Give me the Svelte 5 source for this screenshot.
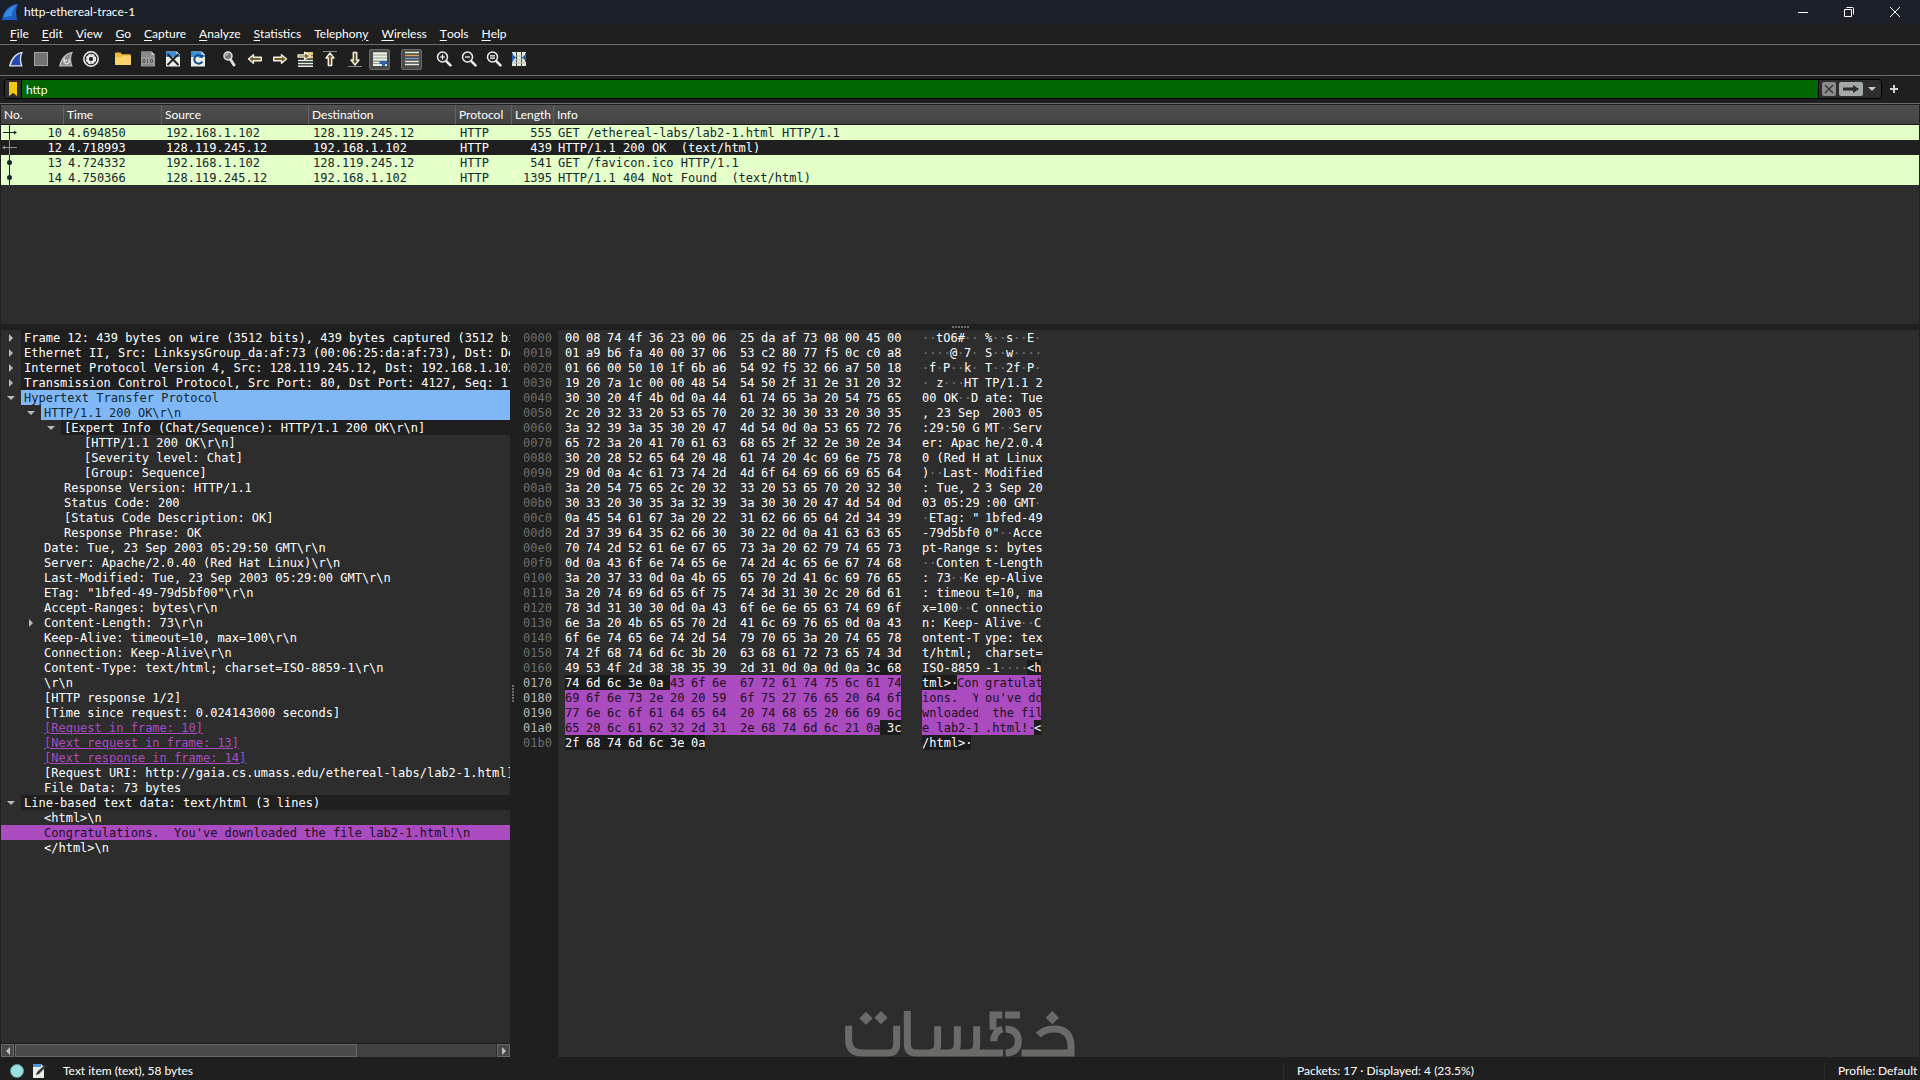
<script>
    const menus = ['File', 'Edit', 'View', 'Go', 'Capture', 'Analyze', 'Statistics', 'Telephony', 'Wireless', 'Tools', 'Help'];
    // Index of the underlined mnemonic, where it is not the first letter
    const mnemonics = { Telephony: 8 };

    const toolbar = [
        'start', 'stop', 'restart', 'options', '|',
        'open', 'save', 'close', 'reload', '|',
        'find', 'back', 'forward', 'goto', 'first', 'last', 'autoscroll', '|',
        'colorize', '|',
        'zoomin', 'zoomout', 'zoomreset', 'resize'
    ];
    const pressed = ['autoscroll', 'colorize'];

    const packets = [
        { mark: 'request', no: 10, time: '4.694850', src: '192.168.1.102', dst: '128.119.245.12', proto: 'HTTP', len: 555, info: 'GET /ethereal-labs/lab2-1.html HTTP/1.1' },
        { mark: 'response', no: 12, time: '4.718993', src: '128.119.245.12', dst: '192.168.1.102', proto: 'HTTP', len: 439, info: 'HTTP/1.1 200 OK  (text/html)' },
        { mark: 'dot', no: 13, time: '4.724332', src: '192.168.1.102', dst: '128.119.245.12', proto: 'HTTP', len: 541, info: 'GET /favicon.ico HTTP/1.1' },
        { mark: 'dot', no: 14, time: '4.750366', src: '128.119.245.12', dst: '192.168.1.102', proto: 'HTTP', len: 1395, info: 'HTTP/1.1 404 Not Found  (text/html)' }
    ];
    let selected = $state(12);
    let filter = $state('http');

    const tree = [
        { d: 0, arrow: 'right', look: 'proto', t: 'Frame 12: 439 bytes on wire (3512 bits), 439 bytes captured (3512 bits' },
        { d: 0, arrow: 'right', look: 'proto', t: 'Ethernet II, Src: LinksysGroup_da:af:73 (00:06:25:da:af:73), Dst: Dell' },
        { d: 0, arrow: 'right', look: 'proto', t: 'Internet Protocol Version 4, Src: 128.119.245.12, Dst: 192.168.1.102' },
        { d: 0, arrow: 'right', look: 'proto', t: 'Transmission Control Protocol, Src Port: 80, Dst Port: 4127, Seq: 1, A' },
        { d: 0, arrow: 'down', look: 'chat', t: 'Hypertext Transfer Protocol' },
        { d: 1, arrow: 'down', look: 'chat', t: 'HTTP/1.1 200 OK\\r\\n' },
        { d: 2, arrow: 'down', look: 'proto', t: '[Expert Info (Chat/Sequence): HTTP/1.1 200 OK\\r\\n]' },
        { d: 3, t: '[HTTP/1.1 200 OK\\r\\n]' },
        { d: 3, t: '[Severity level: Chat]' },
        { d: 3, t: '[Group: Sequence]' },
        { d: 2, t: 'Response Version: HTTP/1.1' },
        { d: 2, t: 'Status Code: 200' },
        { d: 2, t: '[Status Code Description: OK]' },
        { d: 2, t: 'Response Phrase: OK' },
        { d: 1, t: 'Date: Tue, 23 Sep 2003 05:29:50 GMT\\r\\n' },
        { d: 1, t: 'Server: Apache/2.0.40 (Red Hat Linux)\\r\\n' },
        { d: 1, t: 'Last-Modified: Tue, 23 Sep 2003 05:29:00 GMT\\r\\n' },
        { d: 1, t: 'ETag: "1bfed-49-79d5bf00"\\r\\n' },
        { d: 1, t: 'Accept-Ranges: bytes\\r\\n' },
        { d: 1, arrow: 'right', t: 'Content-Length: 73\\r\\n' },
        { d: 1, t: 'Keep-Alive: timeout=10, max=100\\r\\n' },
        { d: 1, t: 'Connection: Keep-Alive\\r\\n' },
        { d: 1, t: 'Content-Type: text/html; charset=ISO-8859-1\\r\\n' },
        { d: 1, t: '\\r\\n' },
        { d: 1, t: '[HTTP response 1/2]' },
        { d: 1, t: '[Time since request: 0.024143000 seconds]' },
        { d: 1, link: true, t: '[Request in frame: 10]' },
        { d: 1, link: true, t: '[Next request in frame: 13]' },
        { d: 1, link: true, t: '[Next response in frame: 14]' },
        { d: 1, t: '[Request URI: http://gaia.cs.umass.edu/ethereal-labs/lab2-1.html]' },
        { d: 1, t: 'File Data: 73 bytes' },
        { d: 0, arrow: 'down', look: 'proto', t: 'Line-based text data: text/html (3 lines)' },
        { d: 1, t: '<html>\\n' },
        { d: 1, look: 'current', t: "Congratulations.  You've downloaded the file lab2-1.html!\\n" },
        { d: 1, t: '</html>\\n' }
    ];

    const dump = [
        '0008744f3623000625daaf7308004500', '01a9b6fa4000370653c28077f50cc0a8',
        '01660050101f6ba65492f53266a75018', '19207a1c0000485454502f312e312032',
        '3030204f4b0d0a446174653a20547565', '2c203233205365702032303033203035',
        '3a32393a353020474d540d0a53657276', '65723a204170616368652f322e302e34',
        '30202852656420486174204c696e7578', '290d0a4c6173742d4d6f646966696564',
        '3a205475652c20323320536570203230', '30332030353a32393a303020474d540d',
        '0a455461673a202231626665642d3439', '2d3739643562663030220d0a41636365',
        '70742d52616e6765733a206279746573', '0d0a436f6e74656e742d4c656e677468',
        '3a2037330d0a4b6565702d416c697665', '3a2074696d656f75743d31302c206d61',
        '783d3130300d0a436f6e6e656374696f', '6e3a204b6565702d416c6976650d0a43',
        '6f6e74656e742d547970653a20746578', '742f68746d6c3b20636861727365743d',
        '49534f2d383835392d310d0a0d0a3c68', '746d6c3e0a436f6e67726174756c6174',
        '696f6e732e2020596f7527766520646f', '776e6c6f61646564207468652066696c',
        '65206c6162322d312e68746d6c210a3c', '2f68746d6c3e0a'
    ];

    // Width of one character cell in the byte view
    const CELL = 7;

    // Byte ranges of the text data protocol and of the selected line within it
    const FIELD = [0x16e, 0x1b7];
    const LINE = [0x175, 0x1af];

    const inside = (i, [from, to]) => i >= from && i < to;
    const kindOf = (i) => (inside(i, LINE) ? 'line' : inside(i, FIELD) ? 'field' : 'plain');

    // A gap is filled only when the bytes on both of its sides are
    function between(a, b) {
        if (a === 'plain' || b === 'plain') return 'plain';
        return a === b ? a : 'field';
    }

    const hexLines = dump.map((raw, row) => {
        const hex = [];
        const ascii = [];
        raw.match(/../g).forEach((b, i) => {
            const at = row * 16 + i;
            const kind = kindOf(at);
            const gap = between(kindOf(at - 1), kind);
            if (i > 0) hex.push({ kind: gap, text: i === 8 ? '  ' : ' ' });
            hex.push({ kind, text: b });

            const code = parseInt(b, 16);
            const printable = code >= 32 && code < 127;
            const look = !printable && kind === 'plain' ? 'dim' : kind;
            const char = printable ? String.fromCharCode(code) : '·';
            if (i === 8) ascii.push({ kind: gap, text: ' ' });
            const last = ascii[ascii.length - 1];
            if (last && last.kind === look && i !== 8) last.text += char;
            else ascii.push({ kind: look, text: char });
        });
        return {
            offset: (row * 16).toString(16).padStart(4, '0'),
            active: row >= 23 && row <= 26,
            hex,
            ascii
        };
    });
</script>

<svelte:head>
    <title>http-ethereal-trace-1</title>
</svelte:head>

{#snippet icon(name)}
    <svg class="icon" viewBox="0 0 16 16" aria-hidden="true">
        {#if name === 'start' || name === 'restart'}
            <path d="M1 15.5C2.5 8 7 1.5 15 .8C12.6 5 12.7 10.5 14.7 15.5Z" fill={name === 'start' ? '#dfe6ea' : '#b9b9b9'} />
            <path d="M3 14.2C4.6 8.5 8 3.7 12.8 2.3C11.5 6 11.5 10.5 12.8 14.2Z" fill={name === 'start' ? '#2747b5' : '#8c8c8c'} />
            {#if name === 'restart'}
                <path d="M10.3 8.3A2.5 2.5 0 1 1 6.5 9M6 6.5V9.5H9" fill="none" stroke="#e0e0e0" stroke-width="1.3" />
            {/if}
        {:else if name === 'stop'}
            <rect x="1.5" y="1.5" width="13" height="13" fill="#727272" stroke="#a5a5a5" />
        {:else if name === 'options'}
            <circle cx="8" cy="8" r="7.2" fill="#2b2b2b" stroke="#f2f2f2" stroke-width="1.5" />
            <circle cx="8" cy="8" r="4.3" fill="none" stroke="#f2f2f2" stroke-width="1.8" stroke-dasharray="2.8 .58" />
            <circle cx="8" cy="8" r="3" fill="none" stroke="#f2f2f2" stroke-width="1.6" />
        {:else if name === 'open'}
            <path d="M0 2.5Q0 1.5 1 1.5H5.5L7 3.3H14.5Q16 3.3 16 4.5V13Q16 14 15 14H1Q0 14 0 13Z" fill="#f0b93e" />
            <path d="M0 6.5H5.5L7.5 5H16V13Q16 14 15 14H1Q0 14 0 13Z" fill="#fbd56c" />
        {:else if name === 'save' || name === 'close' || name === 'reload'}
            <path d="M1 .5H11.5L15 4V15.5H1Z" fill={name === 'save' ? '#9a9a9a' : '#e8efe4'} />
            <path d="M1 .5H11.5L15 4V6H1Z" fill={name === 'save' ? '#8a8a8a' : '#3f8fd8'} />
            <path d="M11.5 .5V4H15Z" fill={name === 'save' ? '#c9c9c9' : '#f4f7f0'} />
            {#if name === 'save'}
                <path d="M3 8.5H5V11.5H3ZM7.5 8V12M10.5 8.5H12.5V11.5H10.5Z" fill="none" stroke="#5b5b5b" />
                <path d="M3 14H13" stroke="#777" />
            {:else if name === 'close'}
                <path d="M2.5 3L13.5 14M13.5 3L2.5 14" stroke="#202020" stroke-width="1.9" />
            {:else}
                <path d="M11.8 5.5A4.3 4.3 0 1 0 12.3 10.5" fill="none" stroke="#17498a" stroke-width="2" />
                <path d="M8.5 6.8H13V2.8Z" fill="#17498a" />
            {/if}
        {:else if name === 'find'}
            <circle cx="6" cy="5" r="4" fill="#77777a" stroke="#e6e6e6" stroke-width="1.5" />
            <path d="M8.5 8.5L12 14" stroke="#dcdcdc" stroke-width="3" stroke-linecap="round" />
            <path d="M4 4.5Q4.5 3 6 3" fill="none" stroke="#fff" />
        {:else if name === 'back' || name === 'forward'}
            <g class:flip={name === 'forward'}>
                <path d="M1.5 8L6.5 3.8V6.3H14.3V9.7H6.5V12.2Z" fill="#6e5c24" stroke="#f3efe4" stroke-width="1.4" stroke-linejoin="round" />
            </g>
        {:else if name === 'goto'}
            <path d="M8 2.5H16M11 6H16" stroke="#e6ca72" stroke-width="3" />
            <path d="M1 9.5H16M1 12.5H16M1 15.3H16" stroke="#e4efdd" stroke-width="1.4" />
            <path d="M1 3.8H7.5V1.2L13.5 5L7.5 8.8V6.2H1Z" fill="#8a7430" stroke="#f3efe4" stroke-width="1.2" stroke-linejoin="round" />
        {:else if name === 'first' || name === 'last'}
            <g class:flipv={name === 'last'}>
                <path d="M1 .5H15" stroke="#8b8b8b" />
                <path d="M8 2L12 7H9.7V14.5H6.3V7H4Z" fill="#6e5c24" stroke="#f3efe4" stroke-width="1.4" stroke-linejoin="round" />
            </g>
        {:else if name === 'autoscroll'}
            <path d="M1 2.5H15M1 5.5H15M1 8.5H15" stroke="#e7f2e0" stroke-width="2.6" />
            <path d="M1 11.5H8M1 14H15" stroke="#e7f2e0" stroke-width="1.8" />
            <path d="M7.5 10H15V12L13 13.5V15H10V13.5L7.5 12Z" fill="#2b62b8" />
        {:else if name === 'colorize'}
            <path d="M1 1.5H15M1 10.5H15M1 13.5H15" stroke="#e2f0d8" stroke-width="1.6" />
            <path d="M1 4.5H15" stroke="#d3a566" stroke-width="1.4" />
            <path d="M1 7.5H15" stroke="#6f9fd8" stroke-width="1.4" />
        {:else if name === 'resize'}
            <rect x="1" y="1" width="14" height="14" fill="#dfeadb" />
            <path d="M5.5 0V16M10.5 0V16" stroke="#3a3a3a" />
            <path d="M1 5H15M1 9H15M1 12H15" stroke="#b4beb2" />
            <path d="M1 2H2V4L5 6.5L2 9V11H1ZM15 2H14V4L11 6.5L14 9V11H15Z" fill="#2860b0" />
        {:else}
            <circle cx="6.5" cy="6" r="5" fill="#242424" stroke="#eeeeee" stroke-width="1.5" />
            <path d="M10.5 10.3L14.5 14.3" stroke="#eeeeee" stroke-width="2.6" stroke-linecap="round" />
            {#if name === 'zoomin'}
                <path d="M4 6H9M6.5 3.5V8.5" stroke="#fff" stroke-width="1.2" />
            {:else if name === 'zoomout'}
                <path d="M4 6H9" stroke="#fff" stroke-width="1.2" />
            {:else}
                <path d="M4 4.8H9M4 7.2H9" stroke="#fff" stroke-width="1.2" />
            {/if}
        {/if}
    </svg>
{/snippet}

{#snippet cells(runs)}
    <div>{#each runs as r}<span class={r.kind} style="width: {r.text.length * CELL}px">{r.text}</span>{/each}</div>
{/snippet}

<div class="window">
    <header class="titlebar">
        <svg class="icon" viewBox="0 0 16 16" aria-hidden="true">
            <path d="M0 16C1.5 7 7 .5 16 0C13.5 5 13.5 11 15.5 16Z" fill="#1c5fc4" />
            <path d="M1 13C4 6 9 2 15 .8C12 4 10 8 9.5 12Z" fill="#3f9cf0" opacity=".7" />
        </svg>
        <h1>http-ethereal-trace-1</h1>
        <div class="controls">
            <button aria-label="Minimize"><svg viewBox="0 0 10 10"><path d="M0 5.5H10" /></svg></button>
            <button aria-label="Restore"><svg viewBox="0 0 10 10"><path d="M.5 2.5H7.5V9.5H.5ZM2.5 .5H8.5Q9.5 .5 9.5 1.5V7.5" /></svg></button>
            <button aria-label="Close"><svg viewBox="0 0 10 10"><path d="M0 0L10 10M10 0L0 10" /></svg></button>
        </div>
    </header>

    <nav class="menubar">
        {#each menus as m}
            {@const i = mnemonics[m] ?? 0}
            <button>{m.slice(0, i)}<u>{m[i]}</u>{m.slice(i + 1)}</button>
        {/each}
    </nav>

    <div class="toolbar">
        {#each toolbar as name}
            {#if name === '|'}
                <span class="sep"></span>
            {:else}
                <button class:pressed={pressed.includes(name)} aria-label={name}>{@render icon(name)}</button>
            {/if}
        {/each}
    </div>

    <div class="filterbar">
        <div class="filter">
            <button class="bookmark" aria-label="Bookmarks">
                <svg viewBox="0 0 8 14"><path d="M0 0H8V14L4 11L0 14Z" fill="#f3c80f" /></svg>
            </button>
            <input type="text" aria-label="Display filter" spellcheck="false" bind:value={filter} />
            <button class="clear" aria-label="Clear filter">
                <svg viewBox="0 0 14 14"><path d="M3 3L11 11M11 3L3 11" stroke="#3a3a3a" stroke-width="1.5" /></svg>
            </button>
            <button class="apply" aria-label="Apply filter">
                <svg viewBox="0 0 24 14"><path d="M4 5.5H14V3L20 7L14 11V8.500H4Z" fill="#2b2b2b" /></svg>
            </button>
            <button class="recent" aria-label="Recent filters">
                <svg viewBox="0 0 8 4"><path d="M0 0H8L4 4Z" fill="#c8c8c8" /></svg>
            </button>
        </div>
        <button class="add" aria-label="Add filter button">
            <svg viewBox="0 0 8 8"><path d="M4 0V8M0 4H8" stroke="#d0d0d0" stroke-width="2" /></svg>
        </button>
    </div>

    <main class="panes">
        <section class="packets">
            <table>
                <colgroup>
                    <col class="c-no" /><col class="c-time" /><col class="c-addr" /><col class="c-addr" />
                    <col class="c-proto" /><col class="c-len" /><col />
                </colgroup>
                <thead>
                    <tr>
                        <th>No.</th><th>Time</th><th>Source</th><th>Destination</th>
                        <th>Protocol</th><th>Length</th><th>Info</th>
                    </tr>
                </thead>
                <tbody>
                    {#each packets as p}
                        <tr class:selected={p.no === selected} onclick={() => (selected = p.no)}>
                            <td>
                                <div class="no">
                                    <svg viewBox="0 0 16 15" aria-hidden="true">
                                        <path d={p.mark === 'request' ? 'M8.5 0V15M2 7.5H14' : 'M8.5 0V15'} />
                                        {#if p.mark === 'request'}
                                            <path class="fill" d="M13 5.5L16 7.5L13 9.5Z" />
                                        {:else if p.mark === 'response'}
                                            <path d="M3 7.5H16" />
                                            <path class="fill" d="M4 5.5L1 7.5L4 9.5Z" />
                                        {:else}
                                            <circle class="fill" cx="8.5" cy="7.5" r="2.5" />
                                        {/if}
                                    </svg>
                                    <span>{p.no}</span>
                                </div>
                            </td>
                            <td>{p.time}</td>
                            <td>{p.src}</td>
                            <td>{p.dst}</td>
                            <td>{p.proto}</td>
                            <td class="num">{p.len}</td>
                            <td>{p.info}</td>
                        </tr>
                    {/each}
                </tbody>
            </table>
        </section>

        <div class="grip"><i></i><i></i><i></i><i></i><i></i><i></i></div>

        <div class="lower">
            <section class="details">
                <div class="tree" role="tree">
                    {#each tree as n}
                        <div class="node {n.look ?? ''}" role="treeitem" aria-selected={n.look === 'current'}>
                            <span class="indent" style="width: {20 + 20 * n.d}px">
                                {#if n.arrow}
                                    <svg class={n.arrow} viewBox="0 0 8 8" aria-hidden="true"><path d="M2 0L6 4L2 8Z" /></svg>
                                {/if}
                            </span>
                            {#if n.link}
                                <a class="label" href="#frame">{n.t}</a>
                            {:else}
                                <span class="label">{n.t}</span>
                            {/if}
                        </div>
                    {/each}
                </div>
                <div class="scrollbar">
                    <button class="left" aria-label="Scroll left"><svg viewBox="0 0 4 8"><path d="M4 0L0 4L4 8Z" /></svg></button>
                    <div class="track"><div class="thumb"></div></div>
                    <button class="right" aria-label="Scroll right"><svg viewBox="0 0 4 8"><path d="M0 0L4 4L0 8Z" /></svg></button>
                </div>
            </section>

            <div class="grip vertical"><i></i><i></i><i></i><i></i><i></i><i></i></div>

            <section class="bytes">
                <div class="offsets">
                    {#each hexLines as l}<div class:active={l.active}>{l.offset}</div>{/each}
                </div>
                <div class="hex">
                    {#each hexLines as l}{@render cells(l.hex)}{/each}
                </div>
                <div class="ascii">
                    {#each hexLines as l}{@render cells(l.ascii)}{/each}
                </div>
            </section>
        </div>
    </main>

    <footer class="statusbar">
        <div class="left">
            <svg class="expert" viewBox="0 0 14 14" aria-hidden="true"><circle cx="7" cy="7" r="6.5" fill="#9be0e2" stroke="#5f9a9c" /></svg>
            <svg class="comment" viewBox="0 0 14 14" aria-hidden="true">
                <path d="M0 0H8L11 3V14H0Z" fill="#e9eee6" />
                <path d="M0 0H8V3H0Z" fill="#4a94d6" />
                <path d="M3 11L4 8L12 .8L13.5 2.2L6 10Z" fill="#33383c" />
            </svg>
            <span>Text item (text), 58 bytes</span>
        </div>
        <div class="mid">Packets: 17 · Displayed: 4 (23.5%)</div>
        <div class="profile">Profile: Default</div>
    </footer>

    <svg class="watermark" viewBox="0 0 690 138" aria-hidden="true">
        <path d="M11 44V90Q14 126 50 126H130Q156 126 155 96V44M187 0V100Q188 126 212 126H474M278 46V100Q278 126 250 126M337 46V100Q337 126 310 126M395 46V100Q395 126 368 126" />
        <path d="M444 56V12H472M480 12H525M472 54Q446 62 446 91M482 54Q520 56 520 91Q520 124 482 126" />
        <path d="M530 126H678V100Q674 56 632 54Q600 52 580 72" />
        <path class="dot" d="M63 2L83 22L63 42L43 22ZM108 0L128 20L108 40L88 20ZM622 0L642 20L622 40L602 20Z" />
    </svg>
</div>

<style>
    :global(body) {
        background: #1f1f1f;
    }

    .window {
        position: relative;
        display: flex;
        flex-direction: column;
        min-height: 100vh;
        overflow: hidden;
        background: #1f1f1f;
        color: #ffffff;
        font: 12px/16px Lato, sans-serif;
        cursor: default;
    }

    button {
        display: flex;
        align-items: center;
        justify-content: center;
        padding: 0;
        border: 0;
        background: none;
        color: inherit;
        font: inherit;
    }

    .icon {
        width: 16px;
        height: 16px;
    }

    .flip {
        transform: translate(16px) scaleX(-1);
    }

    .flipv {
        transform: translateY(16px) scaleY(-1);
    }

    .titlebar {
        display: flex;
        align-items: center;
        height: 23px;
        padding: 0 2px;
        gap: 6px;
        background: #1b2029;
    }

    h1 {
        flex: 1;
        margin: 0;
        font-size: 12px;
        font-weight: 400;
    }

    .controls {
        display: flex;
    }

    .controls button {
        width: 46px;
        height: 20px;
    }

    .controls svg {
        width: 10px;
        height: 10px;
        fill: none;
        stroke: #ffffff;
    }

    .menubar {
        display: flex;
        height: 21px;
        padding-left: 4px;
        border-bottom: 1px solid #6c6c6c;
    }

    .menubar button {
        padding: 0 7px 0 6px;
        white-space: pre;
    }

    .menubar u {
        text-underline-offset: 2px;
    }

    .toolbar {
        display: flex;
        align-items: center;
        height: 28px;
        padding: 0 0 2px 3px;
        border-bottom: 1px solid #6c6c6c;
    }

    .toolbar button {
        width: 25px;
        height: 21px;
    }

    .toolbar .pressed {
        width: 21px;
        margin: 0 2px;
        border: 1px solid #6a6a6a;
        border-radius: 2px;
        background: #4a4a4a;
    }

    .sep {
        width: 7px;
    }

    .filterbar {
        display: flex;
        align-items: center;
        height: 26px;
        padding: 0 22px 1px 4px;
        gap: 8px;
        border-bottom: 1px solid #6c6c6c;
    }

    .filter {
        flex: 1;
        display: flex;
        align-items: center;
        height: 18px;
        border: 1px solid #000000;
        border-radius: 3px;
        background: #2d2d2d;
    }

    .bookmark {
        width: 16px;
    }

    .bookmark svg {
        width: 8px;
        height: 14px;
    }

    .filter input {
        flex: 1;
        min-width: 0;
        height: 18px;
        box-sizing: border-box;
        padding: 0 4px;
        border: 0;
        border-left: 1px solid #000000;
        border-right: 1px solid #000000;
        outline: 0;
        background: #006600;
        color: #ffffff;
        font: inherit;
    }

    .clear,
    .apply {
        height: 14px;
        margin-left: 3px;
        border-radius: 2px;
        background: #a3aaa6;
    }

    .clear {
        width: 14px;
        background: #8c8c8c;
    }

    .clear svg {
        width: 14px;
        height: 14px;
    }

    .apply {
        width: 24px;
    }

    .apply svg {
        width: 24px;
        height: 14px;
    }

    .recent {
        width: 18px;
    }

    .recent svg {
        width: 8px;
        height: 4px;
    }

    .add svg {
        width: 8px;
        height: 8px;
    }

    .panes {
        flex: 1;
        display: grid;
        grid-template-rows: 219fr 6px 727fr;
        padding: 1px 1px 0;
    }

    .packets {
        min-height: 0;
        overflow: hidden;
        background: #2d2d2d;
    }

    table {
        width: 100%;
        border-spacing: 0;
        table-layout: fixed;
    }

    .c-no {
        width: 63px;
    }

    .c-time {
        width: 98px;
    }

    .c-addr {
        width: 147px;
    }

    .c-proto {
        width: 56px;
    }

    .c-len {
        width: 42px;
    }

    th {
        height: 20px;
        box-sizing: border-box;
        padding: 0 0 0 3px;
        border-right: 1px solid #646464;
        border-bottom: 1px solid #1a1a1a;
        background: linear-gradient(#505050, #434343);
        font-weight: 400;
        line-height: 18px;
        text-align: left;
    }

    th:last-child {
        border-right: 0;
    }

    tbody,
    .tree,
    .bytes {
        font: 12px/14px 'DejaVu Sans Mono', monospace;
    }

    td {
        padding: 1px 2px 0 4px;
        white-space: pre;
    }

    tbody tr {
        background: #e4ffc7;
        color: #12272e;
    }

    tbody .selected {
        background: #1f1f1f;
        color: #ffffff;
    }

    td:first-child {
        padding-top: 0;
        padding-left: 0;
    }

    .no {
        display: flex;
        justify-content: space-between;
    }

    .no span {
        padding-top: 1px;
    }

    .no svg {
        width: 16px;
        height: 15px;
        fill: none;
        stroke: #12272e;
    }

    .no .fill {
        fill: #12272e;
        stroke: none;
    }

    .selected .no svg {
        stroke: #8f8f8f;
    }

    .selected .no .fill {
        fill: #8f8f8f;
    }

    .num {
        text-align: right;
    }

    .grip {
        display: flex;
        align-items: center;
        justify-content: center;
        gap: 1px;
    }

    .grip i {
        width: 2px;
        height: 2px;
        background: #6f6f6f;
    }

    .grip.vertical {
        flex-direction: column;
    }

    .lower {
        display: grid;
        grid-template-columns: 509fr 6px 1403fr;
        min-height: 0;
    }

    .details {
        display: flex;
        flex-direction: column;
        min-width: 0;
        background: #2d2d2d;
    }

    .tree {
        flex: 1;
        min-height: 0;
        overflow: hidden;
    }

    .node {
        display: flex;
        white-space: pre;
    }

    .indent {
        display: flex;
        flex: none;
        align-items: center;
        justify-content: flex-end;
        box-sizing: border-box;
        padding-right: 6px;
    }

    .indent svg {
        width: 8px;
        height: 8px;
        fill: #b9b9b9;
    }

    .indent .down {
        transform: rotate(90deg);
    }

    .label {
        flex: 1;
        min-width: 0;
        padding: 1px 0 0 3px;
        overflow: hidden;
    }

    .proto .label {
        background: #1f1f1f;
    }

    .chat .label {
        background: #80b7f7;
        color: #12272e;
    }

    .current {
        background: #aa4bc0;
        color: #1b1020;
    }

    a.label {
        color: #a94cc0;
    }

    .scrollbar {
        display: flex;
        gap: 1px;
        height: 13px;
        border-top: 1px solid #1a1a1a;
    }

    .scrollbar button {
        width: 13px;
        box-sizing: border-box;
        border: 1px solid #6a6a6a;
        background: #484848;
    }

    .scrollbar svg {
        width: 4px;
        height: 8px;
        fill: #c0c0c0;
    }

    .track {
        flex: 1;
        background: #414141;
    }

    .thumb {
        width: 71%;
        height: 13px;
        box-sizing: border-box;
        border: 1px solid #6a6a6a;
        background: #4b4b4b;
    }

    .bytes {
        display: flex;
        min-width: 0;
        background: #2d2d2d;
        white-space: pre;
    }

    .offsets {
        box-sizing: border-box;
        width: 42px;
        padding: 0 7px;
        background: #1f1f1f;
        color: #6c6c6c;
    }

    .offsets div {
        padding-top: 1px;
    }

    .offsets .active {
        color: #b5b5b5;
    }

    .hex {
        padding: 0 21px 0 7px;
    }

    .hex div,
    .ascii div {
        display: flex;
    }

    .hex span,
    .ascii span {
        flex: none;
        padding-top: 1px;
    }

    .dim {
        color: #777777;
    }

    .field {
        background: #1c1c1c;
    }

    .line {
        background: #aa4bc0;
        color: #1b1020;
    }

    .statusbar {
        display: grid;
        grid-template-columns: 1283fr 541fr 96fr;
        align-items: center;
        height: 23px;
        padding-top: 4px;
        box-sizing: border-box;
        white-space: nowrap;
    }

    .statusbar .left {
        display: flex;
        align-items: center;
        padding-left: 10px;
    }

    .expert {
        width: 14px;
        height: 14px;
        margin-right: 9px;
    }

    .comment {
        width: 14px;
        height: 14px;
        margin-right: 16px;
    }

    .mid,
    .profile {
        padding-left: 13px;
        border-left: 1px dotted #363636;
    }

    .watermark {
        position: absolute;
        bottom: 23px;
        left: 50%;
        width: 230px;
        height: 46px;
        margin-left: -115px;
        fill: none;
        stroke: #6a6a68;
        stroke-width: 21;
    }

    .watermark .dot {
        fill: #6a6a68;
        stroke: none;
    }
</style>
